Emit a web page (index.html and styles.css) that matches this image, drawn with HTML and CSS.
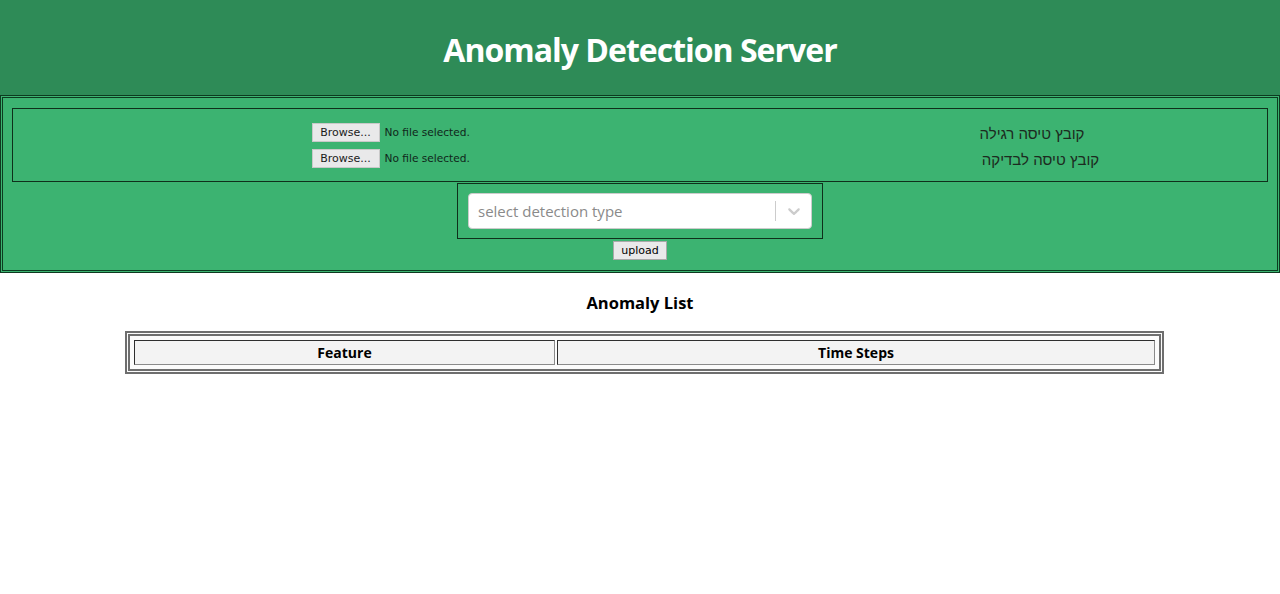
FILE: index.html
```html
<!DOCTYPE html>
<html lang="en">
<head>
<meta charset="utf-8">
<title>Anomaly Detection Server</title>
<link rel="stylesheet" href="styles.css">
</head>
<body>
<header class="top">
  <h1 class="title">Anomaly Detection Server</h1>
</header>
<form class="upload-form">
  <div class="files">
    <div class="file-cell">
      <div class="file-input"><span class="browse">Browse...</span><span class="nofile">No file selected.</span></div>
    </div>
    <div class="label-cell"><span class="lbl lbl-1" dir="rtl">קובץ טיסה רגילה</span></div>
    <div class="file-cell">
      <div class="file-input"><span class="browse">Browse...</span><span class="nofile">No file selected.</span></div>
    </div>
    <div class="label-cell"><span class="lbl lbl-2" dir="rtl">קובץ טיסה לבדיקה</span></div>
  </div>
  <div class="select-wrap">
    <div class="select-control">
      <span class="placeholder">select detection type</span>
      <span class="indicators">
        <span class="sep"></span>
        <svg class="chev" width="20" height="20" viewBox="0 0 20 20"><path d="M4.516 7.548c0.436-0.446 1.043-0.481 1.576 0l3.908 3.747 3.908-3.747c0.533-0.481 1.141-0.446 1.574 0 0.436 0.445 0.408 1.197 0 1.615-0.406 0.418-4.695 4.502-4.695 4.502-0.217 0.223-0.502 0.335-0.787 0.335s-0.57-0.112-0.789-0.335c0 0-4.287-4.084-4.695-4.502s-0.436-1.17 0-1.615z" fill="#cccccc"/></svg>
      </span>
    </div>
  </div>
  <div class="btn-row"><span class="upload-btn">upload</span></div>
</form>
<h3 class="list-title">Anomaly List</h3>
<table class="anomalies">
  <thead>
    <tr><th class="col-feature">Feature</th><th class="col-steps">Time Steps</th></tr>
  </thead>
</table>
</body>
</html>
```

FILE: styles.css
```css
html, body {
  margin: 0;
  padding: 0;
  background: #ffffff;
  font-family: "Open Sans", "Liberation Sans", sans-serif;
  color: #000;
}

.top {
  background: #2e8b57;
  height: 95px;
  display: flex;
  align-items: center;
  justify-content: center;
}

.title {
  margin: 0;
  color: #ffffff;
  font-family: "Open Sans", sans-serif;
  font-weight: 700;
  font-size: 32px;
  letter-spacing: -1px;
  line-height: 1;
  padding-top: 4px;
}

.upload-form {
  background: #3cb371;
  border: 3px double #0d3b20;
  padding: 10px 9px 10px;
  display: flex;
  flex-direction: column;
  align-items: center;
}

.files {
  align-self: stretch;
  border: 1px solid #0f2f1b;
  padding: 10px 0;
  display: grid;
  grid-template-columns: 787px 1fr;
  grid-auto-rows: 26px;
}

.file-cell {
  display: flex;
  align-items: center;
  justify-content: center;
}

.file-input {
  width: 190px;
  display: flex;
  align-items: center;
  gap: 5px;
  font-family: "DejaVu Sans", sans-serif;
  font-size: 11px;
}

.browse {
  display: inline-flex;
  align-items: center;
  justify-content: center;
  width: 66px;
  height: 17px;
  background: #e9e9ea;
  border: 1px solid #c9c9c9;
  color: #1b1b1b;
}

.nofile {
  color: #10261a;
  white-space: nowrap;
  font-size: 10.6px;
}

.label-cell {
  display: flex;
  align-items: center;
  justify-content: center;
}

.lbl {
  font-family: "Liberation Sans", "DejaVu Sans", sans-serif;
  font-size: 15px;
  color: #1c2a20;
  padding-top: 2px;
}

.lbl-1 {
  margin-right: 3px;
}

.lbl-2 {
  margin-left: 14px;
}

.select-wrap {
  width: 344px;
  border: 1px solid #0f2f1b;
  padding: 9px 10px;
  margin-top: 1px;
}

.select-control {
  height: 34px;
  background: #ffffff;
  border: 1px solid #cccccc;
  border-radius: 4px;
  display: flex;
  align-items: center;
  justify-content: space-between;
  padding-left: 9px;
}

.placeholder {
  color: #8a8a8a;
  font-size: 15px;
}

.indicators {
  display: flex;
  align-items: center;
  height: 100%;
}

.sep {
  width: 1px;
  height: 20px;
  background: #cccccc;
}

.chev {
  margin: 0 7px 0 8px;
}

.btn-row {
  display: flex;
  margin-top: 2px;
}

.upload-btn {
  display: inline-flex;
  align-items: center;
  justify-content: center;
  width: 52px;
  height: 17px;
  background: #e9e9ea;
  border: 1px solid #a9a9a9;
  font-family: "DejaVu Sans", sans-serif;
  font-size: 11px;
  color: #000;
}

.list-title {
  margin: 18px 0 0;
  text-align: center;
  font-size: 16.5px;
  font-weight: 700;
  line-height: 24px;
}

.anomalies {
  margin: 16px 0 0 125px;
  width: 1039px;
  border: 5px double #6e6e6e;
  border-spacing: 2px;
  padding: 2px;
  background: #fbfbfb;
}

.anomalies th {
  background: #f3f3f3;
  border: 1px solid #2e2e2e;
  border-right-color: #8a8a8a;
  border-bottom-color: #8a8a8a;
  height: 23px;
  padding: 0;
  font-size: 14px;
  font-weight: 700;
}

.col-feature { width: 419px; }
.col-steps { width: auto; }
```
